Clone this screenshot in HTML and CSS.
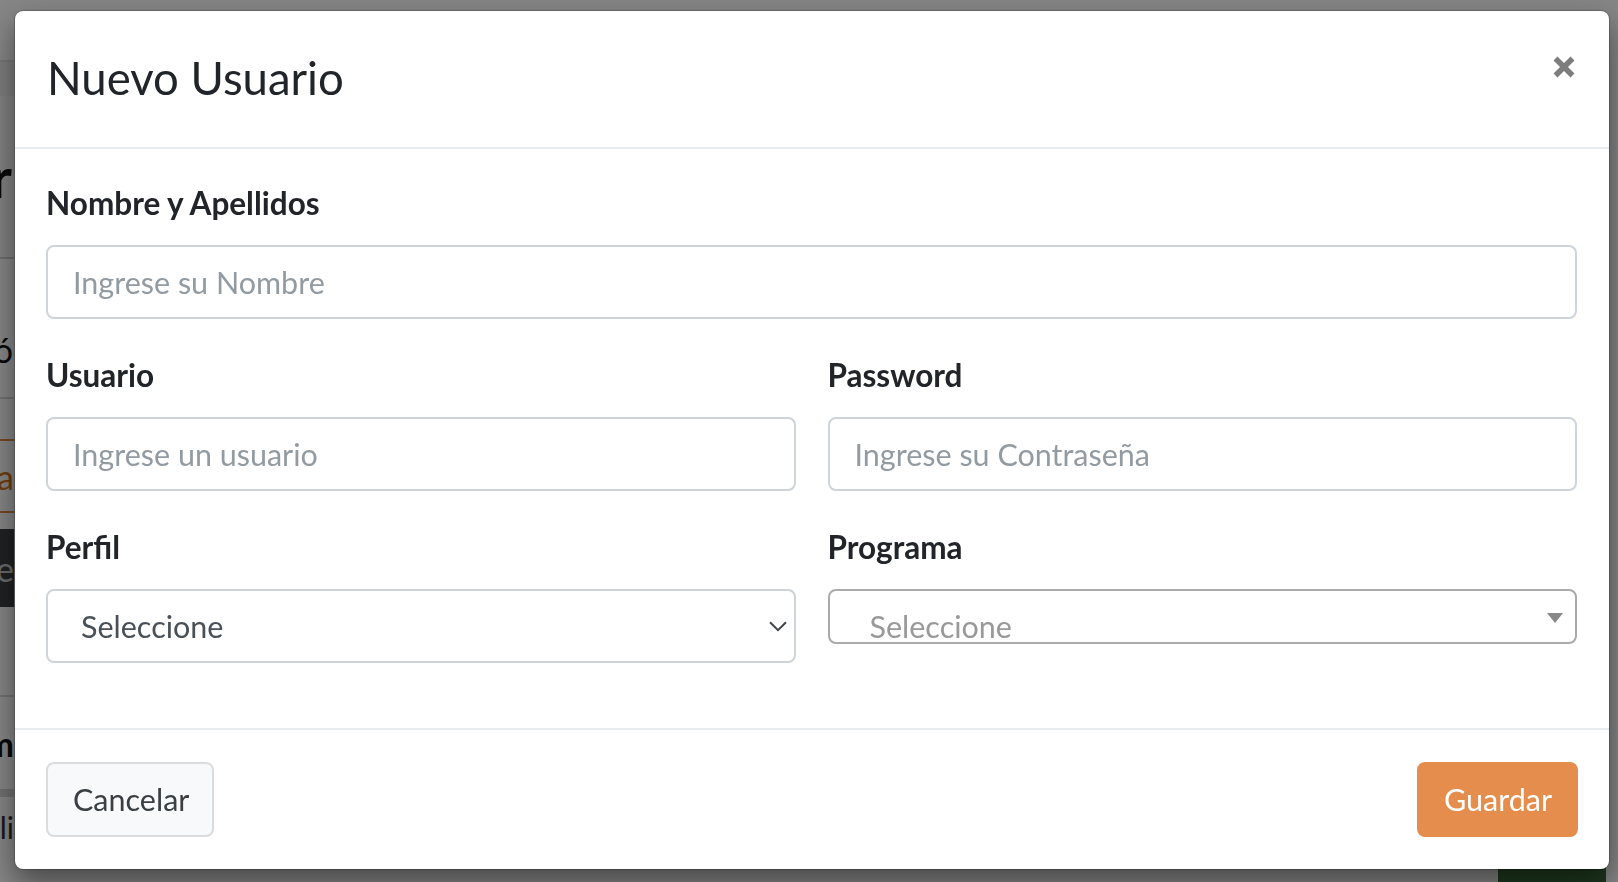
FILE: index.html
```html
<!DOCTYPE html>
<html lang="es">
<head>
<meta charset="utf-8">
<title>Nuevo Usuario</title>
<link rel="stylesheet" href="styles.css">
</head>
<body>
<div class="page">
  <div class="page-side">
    <div class="ps ps-top"></div>
    <div class="ps ps-band"></div>
    <div class="ps ps-heading"><span>Usuar</span></div>
    <div class="ps ps-gap1"></div>
    <div class="ps ps-row"><span>Descripció</span></div>
    <div class="ps ps-gap2"></div>
    <div class="ps ps-orange"><span>Buscara</span></div>
    <div class="ps ps-gap3"></div>
    <div class="ps ps-dark"><span>Nuevo Usuarie</span></div>
    <div class="ps ps-gap4"></div>
    <div class="ps ps-bold"><span>Nom</span></div>
    <div class="ps ps-line"></div>
    <div class="ps ps-small"><span>Usuali</span></div>
  </div>
  <div class="page-main">
    <div class="green-btn"></div>
  </div>
</div>
<div class="backdrop"></div>
<div class="modal-wrap">
  <div class="modal">
    <div class="modal-header">
      <h4 class="modal-title">Nuevo Usuario</h4>
      <button class="close" type="button" aria-label="Cerrar">
        <svg width="22" height="22" viewBox="0 0 22 22"><path d="M2.5 2.5 L19.5 19.5 M19.5 2.5 L2.5 19.5" stroke="#7d7d7d" stroke-width="5.6" fill="none"/></svg>
      </button>
    </div>
    <div class="modal-body">
      <div class="form-group">
        <label class="label">Nombre y Apellidos</label>
        <input class="form-control" type="text" placeholder="Ingrese su Nombre">
      </div>
      <div class="form-row">
        <div class="form-group">
          <label class="label">Usuario</label>
          <input class="form-control" type="text" placeholder="Ingrese un usuario">
        </div>
        <div class="form-group">
          <label class="label">Password</label>
          <input class="form-control" type="text" placeholder="Ingrese su Contraseña">
        </div>
      </div>
      <div class="form-row">
        <div class="form-group">
          <label class="label">Perfil</label>
          <div class="select">
            <span class="select-text">Seleccione</span>
            <svg class="chev" width="18" height="11" viewBox="0 0 18 11"><path d="M1 1.2 L9 9.2 L17 1.2" stroke="#3f4449" stroke-width="2" fill="none"/></svg>
          </div>
        </div>
        <div class="form-group">
          <label class="label">Programa</label>
          <div class="select2">
            <span class="select2-text">Seleccione</span>
            <svg class="tri" width="16" height="10" viewBox="0 0 16 10"><path d="M0 0 H16 L8 10 Z" fill="#888"/></svg>
          </div>
        </div>
      </div>
    </div>
    <div class="modal-footer">
      <button class="btn btn-cancel" type="button">Cancelar</button>
      <button class="btn btn-save" type="button">Guardar</button>
    </div>
  </div>
</div>
</body>
</html>
```
FILE: styles.css
```css
* { box-sizing: border-box; }
html, body { margin: 0; padding: 0; }
body {
  width: 1618px;
  height: 882px;
  overflow: hidden;
  font-family: "Lato", "Liberation Sans", sans-serif;
  color: #212529;
  position: relative;
}

/* page behind the backdrop */
.page {
  display: flex;
  width: 1618px;
  height: 882px;
  background: #fff;
}
.page-side {
  width: 14px;
  flex: none;
  display: flex;
  flex-direction: column;
  overflow: hidden;
}
.ps {
  display: flex;
  justify-content: flex-end;
  white-space: nowrap;
  flex: none;
}
.ps-top { height: 62px; background: #ffffff; border-bottom: 2px solid #e2e2e2; }
.ps-band { height: 34px; background: #efefef; }
.ps-heading { height: 163px; align-items: center; font-size: 56px; font-weight: 700; color: #111; padding-right: 2px; border-bottom: 2px solid #cfcfcf; background: #f7f7f7; }
.ps-gap1 { height: 70px; }
.ps-row { height: 70px; align-items: flex-start; font-size: 34px; color: #111; border-bottom: 2px solid #d6d6d6; padding-right: 1px; }
.ps-gap2 { height: 40px; }
.ps-orange { height: 74px; align-items: center; font-size: 34px; color: #d2741f; border-top: 2px solid #e08a3c; border-bottom: 2px solid #e08a3c; }
.ps-gap3 { height: 16px; }
.ps-dark { height: 78px; align-items: center; font-size: 34px; color: #ccc; background: #3b3f44; }
.ps-gap4 { height: 90px; border-bottom: 2px solid #d8d8d8; }
.ps-bold { height: 92px; align-items: center; font-size: 34px; font-weight: 700; color: #111; }
.ps-line { height: 8px; background: #d6d6d6; }
.ps-small { height: 60px; align-items: center; font-size: 30px; color: #333; }
.page-main {
  flex: 1;
  display: flex;
  flex-direction: column;
  justify-content: flex-end;
  align-items: flex-end;
  padding-right: 12px;
}
.green-btn {
  width: 108px;
  height: 40px;
  background: #3a6a3a;
}

.backdrop {
  position: fixed;
  inset: 0;
  background: rgba(0, 0, 0, 0.48);
}

/* modal */
.modal-wrap {
  position: fixed;
  inset: 0;
  padding: 10px 8px 12px 14px;
}
.modal {
  height: 860px;
  background: #fff;
  border: 1px solid rgba(0, 0, 0, 0.2);
  border-radius: 9px;
  box-shadow: 0 14px 30px rgba(0, 0, 0, 0.45);
  display: flex;
  flex-direction: column;
  background-clip: padding-box;
}
.modal-header {
  height: 138px;
  flex: none;
  border-bottom: 2px solid #e9ecef;
  display: flex;
  align-items: flex-start;
  justify-content: space-between;
  padding: 0 34px 0 32px;
}
.modal-title {
  margin: 0;
  padding-top: 34px;
  font-size: 45.5px;
  font-weight: 400;
  line-height: 66px;
  color: #212529;
}
.close {
  margin-top: 45px;
  padding: 0;
  border: 0;
  background: transparent;
  width: 22px;
  height: 22px;
  display: block;
}
.close svg { display: block; }

.modal-body {
  flex: 1;
  padding: 30px 32px 0 31px;
}
.form-group {
  margin-bottom: 32px;
  display: flex;
  flex-direction: column;
}
.form-row {
  display: grid;
  grid-template-columns: 1fr 1fr;
  column-gap: 32px;
}
.label {
  display: block;
  font-size: 31.5px;
  font-weight: 700;
  line-height: 49px;
  margin-bottom: 16.5px;
  color: #212529;
}
.form-control {
  display: block;
  width: 100%;
  height: 74.5px;
  padding: 0 25px;
  font-family: inherit;
  font-size: 30.5px;
  color: #495057;
  background: #fff;
  border: 2px solid #ced4da;
  border-radius: 8px;
  outline: none;
}
.form-control::placeholder { color: #939ba2; opacity: 1; }

.select {
  height: 74.5px;
  border: 2px solid #ced4da;
  border-radius: 8px;
  display: flex;
  align-items: center;
  justify-content: space-between;
  padding: 0 7px 0 33px;
}
.select-text { font-size: 30.5px; color: #495057; line-height: 1; }
.chev { display: block; margin-top: 2px; }

.select2 {
  height: 55px;
  border: 2px solid #aaa;
  border-radius: 8px;
  display: flex;
  justify-content: space-between;
  align-items: flex-start;
  padding: 0 12px 0 40px;
  overflow: hidden;
}
.select2-text { font-size: 30.5px; color: #999; line-height: 1; padding-top: 20px; }
.tri { display: block; margin-top: 22px; }

.modal-footer {
  flex: none;
  height: 141px;
  border-top: 2px solid #e9ecef;
  display: flex;
  align-items: center;
  justify-content: space-between;
  padding: 0 31px 0 31px;
}
.btn {
  font-family: inherit;
  font-size: 30.5px;
  height: 75px;
  border-radius: 8px;
  padding: 0 25px;
  line-height: 1;
}
.btn-cancel {
  width: 168px;
  background: #f8f9fa;
  border: 2px solid #dadcde;
  color: #3a3f44;
}
.btn-save {
  width: 161px;
  background: #e48d4c;
  border: 2px solid #e48d4c;
  color: #fff;
}
```
